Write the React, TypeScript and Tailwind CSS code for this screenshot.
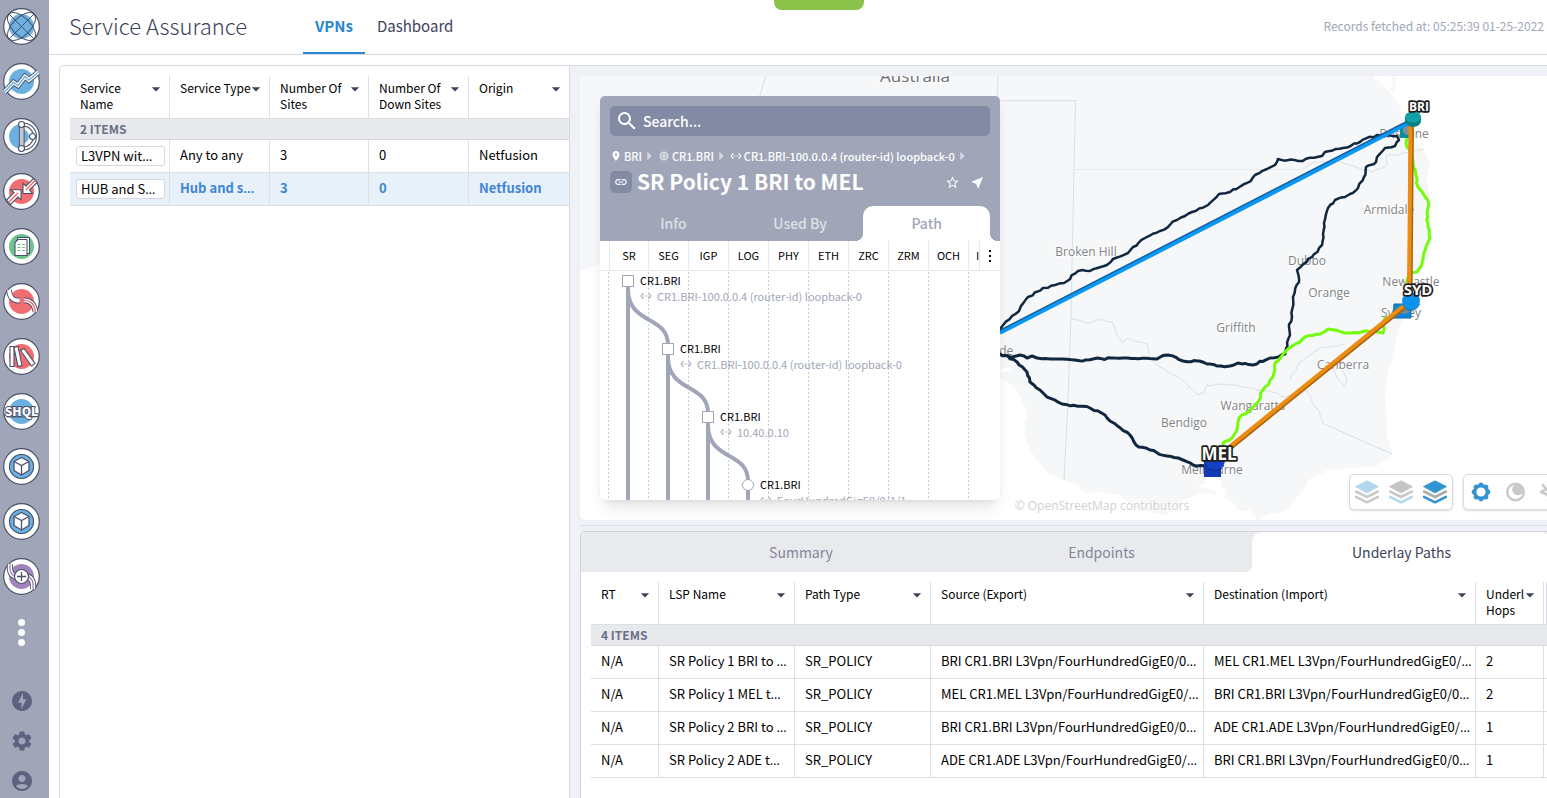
import type { ReactNode } from "react";
import {
  MdAccountCircle,
  MdArrowDropDown,
  MdArrowRight,
  MdLink,
  MdMemory,
  MdNearMe,
  MdOfflineBolt,
  MdPlace,
  MdSearch,
  MdSettings,
  MdSettingsEthernet,
  MdStarBorder,
} from "react-icons/md";

const INK = "#4b5068";
const BLUE = "#6cb0e2";
const RED = "#f26d71";
const GREEN = "#6cc48c";
const PURPLE = "#a284bd";

/* ---------- Sidebar ---------- */

function Disc({ color, children }: { color: string; children?: ReactNode }) {
  return (
    <svg viewBox="0 0 37 37" className="size-[37px]" aria-hidden="true">
      <circle cx="18.5" cy="18.5" r="17.8" fill="#fff" stroke={INK} strokeWidth="1.2" />
      <circle cx="18.5" cy="18.5" r="12.5" fill={color} />
      {children}
    </svg>
  );
}

function GlobeIcon() {
  return (
    <Disc color={BLUE}>
      <g fill="none" stroke={INK} strokeWidth="1">
        <ellipse cx="18.5" cy="18.5" rx="17.6" ry="9" transform="rotate(45 18.5 18.5)" />
        <ellipse cx="18.5" cy="18.5" rx="17.6" ry="9" transform="rotate(-45 18.5 18.5)" />
        <path d="M6 6 31 31M31 6 6 31" />
      </g>
    </Disc>
  );
}

function TrendIcon() {
  const d = "M1.5 29 10.5 19.5 15 22.5 22 13.5 26 17 35.5 9";
  return (
    <Disc color={BLUE}>
      <g fill="none">
        <path d={d} stroke={INK} strokeWidth="5.6" />
        <path d={d} stroke="#fff" strokeWidth="3.8" />
        <path d={d} stroke={BLUE} strokeWidth="1.4" />
      </g>
    </Disc>
  );
}

function TopologyIcon() {
  return (
    <svg viewBox="0 0 37 37" className="size-[37px]" aria-hidden="true">
      <circle cx="18.5" cy="18.5" r="17.8" fill="#fff" stroke={INK} strokeWidth="1.2" />
      <path d="M18.5 6a12.5 12.5 0 0 0 0 25z" fill={BLUE} />
      <path d="M20 6.5a12 12 0 0 1 0 24" fill="none" stroke={INK} strokeWidth="4" />
      <path d="M20 6.5a12 12 0 0 1 0 24" fill="none" stroke="#fff" strokeWidth="2" />
      <path d="M21 11.5a7.5 7.5 0 0 1 0 14z" fill={BLUE} />
      <rect x="16.3" y="7" width="4.8" height="23" fill="#c4c7d2" stroke={INK} strokeWidth="1" />
      <g fill="#fff" stroke={INK} strokeWidth="1.1">
        <circle cx="18.5" cy="6.5" r="3" />
        <circle cx="18.5" cy="30.5" r="3" />
        <circle cx="29.5" cy="18.5" r="3" />
      </g>
    </svg>
  );
}

function ConvergeIcon() {
  return (
    <Disc color={RED}>
      <g fill="#fff" stroke={INK} strokeWidth="1.1">
        <path d="M3.5 27 11 19.5 8 16.8 18 16.8 18 26.8 15 24 7.5 31.5z" />
        <path d="M34 9.5 26.5 17 29.5 20.5 20 20.5 20 10.5 23 13 30.5 5.5z" />
      </g>
      <path d="M5.5 29.5 15 20M32 7.5 23 17" stroke={RED} strokeWidth="1.5" />
    </Disc>
  );
}

function DocsIcon() {
  return (
    <Disc color={GREEN}>
      <g stroke={INK} strokeWidth="1.1" fill="#fff" strokeLinejoin="round">
        <path d="M14.5 9.5H26.5V25.5H14.5z" />
        <path d="M15 11.5H24V27.5H12V14.5z" />
      </g>
      <path d="M14.5 16.5h3M19 16.5h3M14.5 19.5h3M19 19.5h3M14.5 22.5h3M19 22.5h3" stroke={GREEN} strokeWidth="1.2" />
    </Disc>
  );
}

function SwirlIcon() {
  const a = "M6 7C6.5 14 10 18.5 17.5 17.5";
  const b = "M20 17.5C27 16.5 31.5 21 32.5 29";
  return (
    <Disc color={RED}>
      <g fill="none">
        <path d={a} stroke={INK} strokeWidth="5.6" />
        <path d={a} stroke="#fff" strokeWidth="3.8" />
        <path d={b} stroke={INK} strokeWidth="5.6" />
        <path d={b} stroke="#fff" strokeWidth="3.8" />
        <path d={b} stroke={RED} strokeWidth="1.4" />
        <path d="M16.5 18h4.5" stroke={RED} strokeWidth="4.5" />
      </g>
    </Disc>
  );
}

function BooksIcon() {
  return (
    <Disc color={RED}>
      <g fill="#fff" stroke={INK} strokeWidth="1.1">
        <path d="M7 8.5h4v20H7z" />
        <path d="M11 9.5 15 8.5 19 27.5 15 28.5z" />
        <path d="M17.5 12.5 21 10.5 32 25.5 28.5 28z" />
      </g>
    </Disc>
  );
}

function ShqlIcon() {
  return (
    <Disc color={BLUE}>
      <path d="M4 14h29M4 24h29" stroke={INK} strokeWidth="0.9" />
      <text
        x="18.5"
        y="23"
        textAnchor="middle"
        fontFamily="'Noto Sans CJK SC', sans-serif"
        fontWeight="900"
        fontSize="12"
        fill="#fff"
        stroke={INK}
        strokeWidth="1.8"
        paintOrder="stroke"
      >
        SHQL
      </text>
    </Disc>
  );
}

function CubeIcon() {
  return (
    <Disc color={BLUE}>
      <circle cx="18.5" cy="18.5" r="12" fill="none" stroke={INK} strokeWidth="1.1" />
      <path d="M18.5 9.5 26 13.5 26 22.5 18.5 27 11 22.5 11 13.5z" fill="#fff" stroke={INK} strokeWidth="1.3" strokeLinejoin="round" />
      <path d="M11 13.5 18.5 17.5 26 13.5M18.5 17.5V27" fill="none" stroke={INK} strokeWidth="1.3" />
    </Disc>
  );
}

function PlusSwirlIcon() {
  const a = "M7 6C6 14 9 18 14 19";
  const b = "M30 31C31 23 28 19 23 18";
  return (
    <Disc color={PURPLE}>
      <g fill="none">
        <path d={a} stroke={INK} strokeWidth="6" />
        <path d={a} stroke="#fff" strokeWidth="4.2" />
        <path d={a} stroke={PURPLE} strokeWidth="1.3" />
        <path d={b} stroke={INK} strokeWidth="6" />
        <path d={b} stroke="#fff" strokeWidth="4.2" />
        <path d={b} stroke={PURPLE} strokeWidth="1.3" />
      </g>
      <circle cx="18.5" cy="18.5" r="7" fill="#fff" stroke={INK} strokeWidth="1.2" />
      <path d="M14 18.5h9M18.5 14v9" stroke={INK} strokeWidth="1.3" />
    </Disc>
  );
}

const apps = [
  { label: "Network explorer", icon: <GlobeIcon /> },
  { label: "Trends", icon: <TrendIcon /> },
  { label: "Topology", icon: <TopologyIcon /> },
  { label: "Comparison", icon: <ConvergeIcon /> },
  { label: "Reports", icon: <DocsIcon /> },
  { label: "Failure impact", icon: <SwirlIcon /> },
  { label: "Inventory", icon: <BooksIcon /> },
  { label: "Query", icon: <ShqlIcon /> },
  { label: "Models", icon: <CubeIcon /> },
  { label: "Services", icon: <CubeIcon /> },
  { label: "Add application", icon: <PlusSwirlIcon /> },
];

function Sidebar() {
  return (
    <nav aria-label="Applications" className="flex w-[49px] shrink-0 flex-col items-center bg-[#a0a6b8] pt-2 pr-[6px]">
      <div className="flex flex-col gap-[18px]">
        {apps.map((app) => (
          <button key={app.label} type="button" aria-label={app.label} className="size-[37px]">
            {app.icon}
          </button>
        ))}
      </div>
      <button type="button" aria-label="More applications" className="mt-6 flex flex-col gap-[3px]">
        <span className="size-[7px] rounded-full bg-white" />
        <span className="size-[7px] rounded-full bg-white" />
        <span className="size-[7px] rounded-full bg-white" />
      </button>
      <div className="mt-auto flex flex-col gap-4 pb-[5px] text-[#5c6280]">
        <button type="button" aria-label="Activity">
          <MdOfflineBolt size={24} />
        </button>
        <button type="button" aria-label="Settings">
          <MdSettings size={24} />
        </button>
        <button type="button" aria-label="Account">
          <MdAccountCircle size={24} />
        </button>
      </div>
    </nav>
  );
}

/* ---------- Header ---------- */

function Header() {
  return (
    <header className="flex h-[55px] shrink-0 items-stretch border-b border-[#d9dbe2] pl-5 text-[#3c425a]">
      <h1 className="w-[234px] text-[22px] leading-[50px] font-light">Service Assurance</h1>
      <nav aria-label="Views" className="flex">
        <a href="#vpns" className="border-b-2 border-[#2a86d1] px-3 text-[15px] leading-[52px] font-bold text-[#2a86d1]">
          VPNs
        </a>
        <a href="#dashboard" className="px-3 text-[15px] leading-[52px]">
          Dashboard
        </a>
      </nav>
      <p className="ml-auto pr-[3px] text-[12px] leading-[52px] text-[#a0a6b8]">Records fetched at: 05:25:39 01-25-2022</p>
    </header>
  );
}

/* ---------- Tables ---------- */

function Clipped({ text }: { text: string }) {
  if (!text.endsWith("…")) return <>{text}</>;
  return (
    <>
      {text.slice(0, -1)}
      <span className="font-['Open_Sans',sans-serif]">…</span>
    </>
  );
}

function HeadCell({ label, sortable = true }: { label: string; sortable?: boolean }) {
  return (
    <th scope="col" className="h-[43px] border-r border-b border-[#dddfe5] p-0 text-left align-top font-normal">
      {sortable && (
        <button type="button" className="flex w-full items-start pt-1 pr-[7px] pl-[10px] text-left">
          <span className="-mr-1 min-w-0 flex-1 text-[12px] leading-4">{label}</span>
          <MdArrowDropDown size={20} className="-mr-1 -mt-px shrink-0 text-[#3c425a]" viewBox="0 0 24 24" />
        </button>
      )}
    </th>
  );
}

function CountRow({ label, span }: { label: string; span: number }) {
  return (
    <tr>
      <td colSpan={span} className="h-[21px] border-b border-[#d5d7df] bg-[#e8e9ed] py-0 pl-[10px] text-[12px] leading-5 font-bold text-[#6b7086]">
        {label}
      </td>
    </tr>
  );
}

const services = [
  { name: "L3VPN wit…", type: "Any to any", sites: "3", down: "0", origin: "Netfusion", active: false },
  { name: "HUB and S…", type: "Hub and s…", sites: "3", down: "0", origin: "Netfusion", active: true },
];

function ServiceTable() {
  return (
    <table className="w-full table-fixed border-separate border-spacing-0 [&_th_span]:-mr-[6px]">
      <colgroup>
        <col className="w-[100px]" />
        <col className="w-[100px]" />
        <col className="w-[99px]" />
        <col className="w-[100px]" />
        <col />
      </colgroup>
      <thead>
        <tr className="[&>th:last-child]:border-r-0">
          <HeadCell label="Service Name" />
          <HeadCell label="Service Type" />
          <HeadCell label="Number Of Sites" />
          <HeadCell label="Number Of Down Sites" />
          <HeadCell label="Origin" />
        </tr>
      </thead>
      <tbody>
        <CountRow label="2 ITEMS" span={5} />
        {services.map((s) => (
          <tr
            key={s.name}
            aria-selected={s.active}
            className={
              "[&>td]:h-[33px] [&>td]:border-b [&>td]:border-[#dddfe5] [&>td]:p-0 [&>td]:align-top [&>td:not(:last-child)]:border-r " +
              (s.active ? "bg-[#e8f1fa] font-bold text-[#3f85d0]" : "")
            }
          >
            <td>
              <button
                type="button"
                className="mt-[6px] ml-[6px] block h-5 w-[89px] rounded-[3px] border border-[#d5d7df] bg-white pl-1 text-left text-[13px] leading-[18px] font-normal whitespace-nowrap text-black"
              >
                <Clipped text={s.name} />
              </button>
            </td>
            {[s.type, s.sites, s.down, s.origin].map((v, i) => (
              <td key={i} className="text-[13px] leading-[30px] whitespace-nowrap">
                <span className="pl-[10px]">
                  <Clipped text={v} />
                </span>
              </td>
            ))}
          </tr>
        ))}
      </tbody>
    </table>
  );
}

const paths = [
  ["N/A", "SR Policy 1 BRI to …", "SR_POLICY", "BRI CR1.BRI L3Vpn/FourHundredGigE0/0…", "MEL CR1.MEL L3Vpn/FourHundredGigE0/…", "2"],
  ["N/A", "SR Policy 1 MEL t…", "SR_POLICY", "MEL CR1.MEL L3Vpn/FourHundredGigE0/…", "BRI CR1.BRI L3Vpn/FourHundredGigE0/0…", "2"],
  ["N/A", "SR Policy 2 BRI to …", "SR_POLICY", "BRI CR1.BRI L3Vpn/FourHundredGigE0/0…", "ADE CR1.ADE L3Vpn/FourHundredGigE0/…", "1"],
  ["N/A", "SR Policy 2 ADE t…", "SR_POLICY", "ADE CR1.ADE L3Vpn/FourHundredGigE0/…", "BRI CR1.BRI L3Vpn/FourHundredGigE0/0…", "1"],
];

function PathTable() {
  return (
    <table className="w-full table-fixed border-separate border-spacing-0">
      <colgroup>
        <col className="w-[68px]" />
        <col className="w-[136px]" />
        <col className="w-[136px]" />
        <col className="w-[273px]" />
        <col className="w-[272px]" />
        <col className="w-[68px]" />
        <col />
      </colgroup>
      <thead>
        <tr>
          <HeadCell label="RT" />
          <HeadCell label="LSP Name" />
          <HeadCell label="Path Type" />
          <HeadCell label="Source (Export)" />
          <HeadCell label="Destination (Import)" />
          <HeadCell label="Underl Hops" />
          <HeadCell label="" sortable={false} />
        </tr>
      </thead>
      <tbody>
        <CountRow label="4 ITEMS" span={7} />
        {paths.map((row) => (
          <tr key={row[1]}>
            {[...row, ""].map((v, i) => (
              <td
                key={i}
                className="h-[33px] border-b border-[#dddfe5] p-0 align-top text-[13px] leading-[30px] whitespace-nowrap not-last:border-r"
              >
                <span className="pl-[10px]">
                  <Clipped text={v} />
                </span>
              </td>
            ))}
          </tr>
        ))}
      </tbody>
    </table>
  );
}

/* ---------- Map ---------- */

type Pt = [number, number];

/* Adds small deterministic bends so that a coarse route reads like a surveyed one. */
function rough(points: Pt[], amp: number): string {
  let seed = 7;
  const rnd = () => {
    seed = (seed * 16807) % 2147483647;
    return seed / 2147483647 - 0.5;
  };
  let d = `M${points[0][0]} ${points[0][1]}`;
  for (let i = 1; i < points.length; i++) {
    const [x0, y0] = points[i - 1];
    const [x1, y1] = points[i];
    const n = Math.max(1, Math.round(Math.hypot(x1 - x0, y1 - y0) / 4));
    for (let k = 1; k <= n; k++) {
      const j = k === n ? 0 : amp;
      d += `L${(x0 + ((x1 - x0) * k) / n + rnd() * j).toFixed(1)} ${(y0 + ((y1 - y0) * k) / n + rnd() * j).toFixed(1)}`;
    }
  }
  return d;
}

const coast: Pt[] = [
  [1373, 76], [1388, 90], [1398, 103], [1403, 120], [1413, 140], [1423, 150], [1430, 163], [1427, 180], [1429, 203], [1431, 240],
  [1427, 262], [1414, 273], [1410, 300], [1404, 318], [1396, 337], [1393, 357], [1388, 370], [1385, 390], [1386, 413], [1388, 440],
  [1392, 455], [1377, 466], [1330, 470], [1313, 477], [1297, 497], [1287, 510], [1270, 513], [1257, 520], [1250, 510], [1237, 510],
  [1233, 503], [1223, 497], [1232, 492], [1222, 488], [1221, 480], [1206, 477], [1204, 484], [1196, 486], [1214, 490], [1216, 494], [1198, 494],
  [1182, 500], [1180, 508], [1165, 516], [1150, 512], [1132, 505], [1120, 495], [1100, 492], [1087, 494], [1075, 484], [1062, 480],
  [1045, 470], [1030, 450], [1023, 435], [1026, 420], [1027, 410], [1015, 388], [1001, 378], [1000, 374], [1011, 371], [1011, 366], [1000, 370],
  [900, 340], [700, 250], [600, 263], [580, 271],
];

const darkRoutes: Pt[][] = [
  [[1000, 329], [1012, 316], [1019, 311], [1021, 306], [1028, 297], [1043, 288], [1064, 283], [1078, 271], [1090, 271], [1107, 265], [1113, 259], [1128, 253], [1133, 247], [1145, 238], [1160, 231], [1177, 220], [1192, 212], [1208, 205], [1219, 194], [1230, 192], [1247, 183], [1255, 175], [1267, 169], [1275, 165], [1278, 159], [1298, 161], [1322, 156], [1325, 152], [1343, 148], [1360, 142], [1377, 135], [1397, 136]],
  [[1397, 136], [1399, 140], [1395, 146], [1385, 148], [1377, 157], [1376, 162], [1366, 167], [1364, 177], [1358, 188], [1350, 194], [1345, 197], [1335, 200], [1328, 208], [1324, 223], [1322, 245], [1312, 257], [1297, 270], [1299, 282], [1293, 297], [1292, 317], [1289, 327], [1290, 335], [1285, 353]],
  [[1000, 354], [1010, 357], [1020, 355], [1027, 358], [1032, 356], [1037, 358], [1058, 359], [1083, 361], [1093, 359], [1123, 358], [1157, 359], [1162, 356], [1168, 355], [1183, 361], [1197, 361], [1207, 364], [1217, 366], [1230, 366], [1238, 363], [1253, 365], [1270, 358], [1285, 354]],
  [[1008, 356], [1017, 362], [1027, 372], [1030, 382], [1040, 390], [1047, 397], [1062, 404], [1090, 408], [1105, 415], [1110, 421], [1130, 435], [1136, 445], [1150, 450], [1167, 456], [1183, 460], [1193, 465], [1206, 466]],
];

const greenRoutes: Pt[][] = [
  [[1407, 138], [1407, 147], [1411, 152], [1413, 163], [1418, 187], [1423, 193], [1429, 204], [1427, 213], [1428, 227], [1430, 238], [1425, 250], [1422, 263], [1417, 272], [1410, 273], [1407, 280], [1407, 300]],
  [[1385, 318], [1383, 333], [1373, 331], [1347, 333], [1328, 329], [1320, 334], [1305, 337], [1300, 342], [1288, 349], [1275, 363], [1273, 377], [1263, 390], [1258, 402], [1250, 410], [1242, 415], [1238, 422], [1237, 430], [1232, 438], [1223, 443], [1222, 452]],
];

const borders: Pt[][] = [
  [[1070, 317], [1078, 320], [1088, 323], [1098, 320], [1112, 322], [1116, 333], [1122, 343], [1128, 338], [1135, 341], [1147, 344], [1150, 358], [1158, 366], [1185, 382], [1198, 395], [1204, 393], [1207, 385], [1233, 385], [1253, 388], [1277, 393], [1283, 397], [1307, 390], [1313, 403], [1320, 413], [1322, 423]],
  [[1303, 169], [1315, 162], [1335, 161], [1350, 165], [1365, 170], [1372, 172], [1387, 165], [1386, 156], [1400, 154], [1412, 152], [1424, 149]],
  [[1290, 380], [1300, 362], [1320, 348], [1345, 344]],
];

const cities = [
  { name: "Broken Hill", x: 1086, y: 256 },
  { name: "Griffith", x: 1236, y: 332 },
  { name: "Bendigo", x: 1184, y: 427 },
  { name: "Wangaratta", x: 1253, y: 410 },
  { name: "Melbourne", x: 1212, y: 474 },
  { name: "Dubbo", x: 1307, y: 265 },
  { name: "Orange", x: 1329, y: 297 },
  { name: "Armidale", x: 1389, y: 214 },
  { name: "Newcastle", x: 1411, y: 286 },
  { name: "Sydney", x: 1401, y: 317 },
  { name: "Canberra", x: 1343, y: 369 },
  { name: "Brisbane", x: 1404, y: 138 },
  { name: "Adelaide", x: 989, y: 355 },
];

const sites = [
  { name: "BRI", x: 1419, y: 111, size: 12 },
  { name: "SYD", x: 1418, y: 295, size: 15 },
  { name: "MEL", x: 1219, y: 460, size: 17 },
];

function MapCanvas() {
  return (
    <svg
      viewBox="580 76 967 444"
      preserveAspectRatio="xMinYMin slice"
      className="block size-full"
      role="img"
      aria-label="Map of south-east Australia with service paths"
    >
      <path d={rough(coast, 2) + "L580 76Z"} fill="#f5f7f9" />
      <path d="M1391 76l4 1 1 12-4 4-2-5 3-5zM1226 490l6 3-6 3z" fill="#f5f7f9" />
      <g fill="none" stroke="#dcdfe2" strokeWidth="1">
        <path d="M766 76 759 98M998 76 997 98M1000 100.5H1076M1075.5 100 1074 169 1071 317 1068 400 1064 481" />
        <path d="M1074 169.5H1303" stroke="#e6e8ea" />
        {borders.map((b, i) => (
          <path key={i} d={rough(b, 2)} />
        ))}
        <path d="M1322 423 1392 454" />
        <path d="M1333 366 1337 378 1345 387 1347 380 1341 366" />
      </g>
      <g
        fill="#818386"
        stroke="#fff"
        strokeWidth="2"
        strokeOpacity="0.8"
        paintOrder="stroke"
        fontFamily="'Open Sans', 'Noto Sans', sans-serif"
        fontSize="12"
        textAnchor="middle"
      >
        {cities.map((c) => (
          <text key={c.name} x={c.x} y={c.y}>
            {c.name}
          </text>
        ))}
        <text x="915" y="82" fontSize="17" fontWeight="500" fill="#6c6e71">
          Australia
        </text>
        <text x="1102" y="510" fill="#cfd0d2">
          © OpenStreetMap contributors
        </text>
      </g>
      <g fill="none" strokeLinejoin="round" strokeLinecap="round">
        {darkRoutes.map((r, i) => (
          <path key={i} d={rough(r, 2)} stroke="#10273f" strokeWidth={i > 1 ? 3 : 2.5} />
        ))}
        {greenRoutes.map((r, i) => (
          <path key={i} d={rough(r, 2)} stroke="#74fb0c" strokeWidth="3" />
        ))}
      </g>
      <path d="M1400 127h11v11h-11z" fill="#0a8f94" />
      <ellipse cx="1407" cy="130" rx="4" ry="5" fill="#7e9099" />
      <path d="M1394 304h17v14h-18z" fill="#0b86dd" stroke="#0a6cb5" strokeWidth="1" />
      <ellipse cx="1404" cy="310" rx="6" ry="4" fill="#6f8798" />
      <g fill="none">
        <path d="M1000 332 1411 121" stroke="#125a96" strokeWidth="4.5" />
        <path d="M1000 333 1411 122" stroke="#0b97f5" strokeWidth="3.6" />
        <path d="M1411.5 122 1410 300M1410 302 1226 451" stroke="#a8650e" strokeWidth="5" />
        <path d="M1410.5 122 1409 300M1409.5 301 1225.5 450" stroke="#ec8c11" strokeWidth="4" />
      </g>
      <path d="M1405 117v4a8 6 0 0 0 16 0v-4z" fill="#077f85" />
      <ellipse cx="1413" cy="117" rx="8" ry="5.5" fill="#10a0a6" />
      <circle cx="1411" cy="301" r="9" fill="#0e93ea" />
      <path d="M1402.5 304a9 9 0 0 0 17 0" fill="none" stroke="#0a76c2" strokeWidth="1" />
      <path d="M1204 460h17v17h-17z" fill="#123ab4" />
      <circle cx="1215" cy="460" r="10" fill="#1441c4" />
      <path d="M1206 465a10 10 0 0 0 18 0" fill="none" stroke="#0c2b86" strokeWidth="1" />
      <g
        fill="#fff"
        stroke="#1e1e1e"
        strokeWidth="3.4"
        strokeLinejoin="round"
        paintOrder="stroke"
        fontFamily="'Open Sans', 'Noto Sans', sans-serif"
        fontWeight="700"
        textAnchor="middle"
      >
        {sites.map((s) => (
          <text key={s.name} x={s.x} y={s.y} fontSize={s.size}>
            {s.name}
          </text>
        ))}
      </g>
    </svg>
  );
}

function LayersGlyph({ top, mid, low }: { top: string; mid: string; low: string }) {
  return (
    <svg viewBox="0 0 24 24" className="size-6" aria-hidden="true">
      <path d="M12 .8 23.5 6.6 12 13 .5 6.6z" fill={top} stroke={top} strokeWidth="0.8" strokeLinejoin="round" />
      <path d="M1 11.5 12 17 23 11.5" fill="none" stroke={mid} strokeWidth="2.6" strokeLinecap="round" strokeLinejoin="round" />
      <path d="M1 16.8 12 22.3 23 16.8" fill="none" stroke={low} strokeWidth="2.6" strokeLinecap="round" strokeLinejoin="round" />
    </svg>
  );
}

function MapToolbar() {
  const box = "flex h-[36px] w-[104px] items-center justify-center gap-[10px] rounded-[5px] border border-[#dcdcdf] bg-white shadow-sm";
  return (
    <div className="absolute -right-5 bottom-[10px] flex gap-[10px]">
      <div className={box}>
        <button type="button" aria-label="Top layer">
          <LayersGlyph top="#b3d7ee" mid="#c9c9ca" low="#c9c9ca" />
        </button>
        <button type="button" aria-label="Bottom layer">
          <LayersGlyph top="#c5c5c6" mid="#c9c9ca" low="#b3d7ee" />
        </button>
        <button type="button" aria-label="All layers">
          <LayersGlyph top="#3494d1" mid="#adadae" low="#3494d1" />
        </button>
      </div>
      <div className={box}>
        <button type="button" aria-label="Day">
          <svg viewBox="0 0 24 24" className="size-6" aria-hidden="true">
            <g fill="#3494d1">
              <circle cx="12" cy="12" r="8" />
              {[0, 45, 90, 135, 180, 225, 270, 315].map((a) => (
                <circle key={a} cx="12" cy="5" r="2.4" transform={`rotate(${a} 12 12)`} />
              ))}
            </g>
            <circle cx="12" cy="12" r="4.6" fill="#fff" />
          </svg>
        </button>
        <button type="button" aria-label="Night">
          <svg viewBox="0 0 24 24" className="size-6" aria-hidden="true">
            <circle cx="12.5" cy="12" r="8.3" fill="#fff" stroke="#c9c9ca" strokeWidth="2.4" />
            <circle cx="15" cy="9.5" r="5.8" fill="#c9c9ca" />
          </svg>
        </button>
        <button type="button" aria-label="Labels">
          <svg viewBox="0 0 24 24" className="size-6" aria-hidden="true">
            <g fill="none" stroke="#c9c9ca" strokeWidth="2.6" strokeLinecap="round">
              <path d="M6 5 9 9 4 12M4 12 9 14 14 19M12 4v16M9 9l9 9" />
            </g>
          </svg>
        </button>
      </div>
    </div>
  );
}

/* ---------- Policy panel ---------- */

const hops = [
  { node: "CR1.BRI", via: "CR1.BRI-100.0.0.4 (router-id) loopback-0" },
  { node: "CR1.BRI", via: "CR1.BRI-100.0.0.4 (router-id) loopback-0" },
  { node: "CR1.BRI", via: "10.40.0.10" },
  { node: "CR1.BRI", via: "FourHundredGigE0/0/1/1" },
];

const layers = ["SR", "SEG", "IGP", "LOG", "PHY", "ETH", "ZRC", "ZRM", "OCH"];

function HopTree() {
  return (
    <div className="relative h-[229px] overflow-hidden">
      <svg viewBox="0 0 400 229" className="absolute top-0 left-0 h-[229px] w-[400px]" aria-hidden="true">
        <g stroke="#c9ccd6" strokeDasharray="2 2">
          {Array.from({ length: 10 }, (_, i) => (
            <path key={i} d={`M${8.5 + i * 40} 1V229`} />
          ))}
        </g>
        <g fill="none" stroke="#a0a6b8" strokeWidth="4">
          {[0, 1, 2, 3].map((i) => (
            <path key={i} d={`M${28 + i * 40} ${10 + i * 68}V229`} />
          ))}
          {[0, 1, 2].map((i) => {
            const x = 28 + i * 40;
            const y = 18 + i * 68;
            return <path key={i} d={`M${x} ${y}C${x} ${y + 36} ${x + 40} ${y + 26} ${x + 40} ${y + 56}`} />;
          })}
        </g>
        <g fill="#fff" stroke="#a0a6b8">
          {[0, 1, 2].map((i) => (
            <rect key={i} x={22.5 + i * 40} y={4.5 + i * 68} width="11" height="11" />
          ))}
          <circle cx="148" cy="214" r="5.5" />
        </g>
      </svg>
      <ol className="relative">
        {hops.map((h, i) => (
          <li key={i} className="h-[68px] pt-px text-[11px] leading-4 whitespace-nowrap" style={{ paddingLeft: 40 + i * 40 }}>
            <p>{h.node}</p>
            <p className="flex items-center gap-[5px] text-[#a0a6b8]">
              <MdSettingsEthernet size={12} />
              {h.via}
            </p>
          </li>
        ))}
      </ol>
    </div>
  );
}

function PolicyPanel() {
  return (
    <section aria-label="Policy details" className="absolute top-5 left-5 w-[400px] overflow-hidden rounded-[5px] bg-white shadow-lg">
      <div className="bg-[#a0a6b8] px-[10px] pt-[10px] text-white">
        <label className="flex h-[30px] items-center gap-1 rounded-[5px] bg-[#838aa3] pl-[5px]">
          <MdSearch size={24} />
          <input
            type="text"
            aria-label="Search"
            placeholder="Search..."
            className="min-w-0 flex-1 bg-transparent text-[14px] leading-5 font-medium outline-none placeholder:text-white placeholder:opacity-100"
          />
        </label>
        <nav aria-label="Breadcrumb" className="mt-[10px] flex h-5 items-center text-[11px] leading-5 font-medium whitespace-nowrap">
          <MdPlace size={12} className="mr-[2px]" />
          <a href="#bri">BRI</a>
          <MdArrowRight size={20} className="-ml-[3px] opacity-60" />
          <MdMemory size={12} className="-ml-px mr-[2px] opacity-80" />
          <a href="#cr1">CR1.BRI</a>
          <MdArrowRight size={20} className="-ml-[3px] opacity-60" />
          <MdSettingsEthernet size={12} className="-ml-px mr-[2px]" />
          <a href="#loopback">CR1.BRI-100.0.0.4 (router-id) loopback-0</a>
          <MdArrowRight size={20} className="-ml-[3px] opacity-60" />
        </nav>
        <div className="mt-[5px] flex h-[22px] items-center">
          <span className="flex size-[22px] items-center justify-center rounded-[5px] bg-[#838aa3]">
            <MdLink size={14} />
          </span>
          <h2 className="ml-[5px] flex-1 pb-[2px] text-[21px] leading-[22px] font-bold whitespace-nowrap">SR Policy 1 BRI to MEL</h2>
          <button type="button" aria-label="Favourite">
            <MdStarBorder size={15} />
          </button>
          <button type="button" aria-label="Locate" className="mr-[5px] ml-[10px]">
            <MdNearMe size={15} />
          </button>
        </div>
        <div role="tablist" className="mt-[13px] grid h-[35px] grid-cols-3 text-[14px] leading-[35px] font-medium text-white/65">
          <button type="button" role="tab" aria-selected={false}>
            Info
          </button>
          <button type="button" role="tab" aria-selected={false}>
            Used By
          </button>
          <button
            type="button"
            role="tab"
            aria-selected={true}
            className="relative rounded-t-[10px] bg-white text-[#a0a6b8] before:absolute before:bottom-0 before:-left-[8px] before:size-[8px] before:bg-[radial-gradient(circle_at_0_0,transparent_8px,#fff_8px)] after:absolute after:-right-[8px] after:bottom-0 after:size-[8px] after:bg-[radial-gradient(circle_at_100%_0,transparent_8px,#fff_8px)]"
          >
            Path
          </button>
        </div>
      </div>
      <div className="flex h-[30px] items-stretch border-b border-[#e8e9ed] pl-[9px] text-[11px] leading-7">
        {layers.map((l, i) => (
          <span key={l} className={(i === 0 ? "w-[39px]" : "w-10") + " shrink-0 border-l border-[#e8e9ed] text-center"}>
            {l}
          </span>
        ))}
        <span className="min-w-0 flex-1 overflow-hidden border-l border-[#e8e9ed] pl-[7px]">I</span>
        <button type="button" aria-label="Column options" className="flex w-[21px] flex-col items-center justify-center gap-[3px] border-l border-[#e8e9ed]">
          <span className="size-[2px] bg-black" />
          <span className="size-[2px] bg-black" />
          <span className="size-[2px] bg-black" />
        </button>
      </div>
      <HopTree />
    </section>
  );
}

/* ---------- Page ---------- */

function DetailTabs() {
  return (
    <div className="overflow-hidden bg-[#e9eaee]">
      <div role="tablist" className="flex pl-[70px] text-[14px] leading-10 text-[#83879a]">
        <button type="button" role="tab" aria-selected={false} className="w-[300px] shrink-0">
          Summary
        </button>
        <button type="button" role="tab" aria-selected={false} className="w-[301px] shrink-0">
          Endpoints
        </button>
        <button
          type="button"
          role="tab"
          aria-selected={true}
          className="relative w-[299px] shrink-0 rounded-t-[10px] bg-white text-[#3c425a] before:absolute before:bottom-0 before:-left-[8px] before:size-[8px] before:bg-[radial-gradient(circle_at_0_0,transparent_8px,#fff_8px)]"
        >
          Underlay Paths
        </button>
      </div>
    </div>
  );
}

export default function App() {
  return (
    <div className="relative flex h-screen overflow-hidden bg-white font-['Noto_Sans_CJK_SC','Noto_Sans',sans-serif] text-black">
      <Sidebar />
      <div className="flex min-w-0 flex-1 flex-col">
        <Header />
        <main className="mt-[10px] ml-[10px] flex min-h-0 flex-1 overflow-hidden rounded-tl-[5px] border-t border-l border-[#d9dbe2] bg-[#eff1f6]">
          <section aria-label="Services" className="w-[510px] shrink-0 border-r border-[#d9dbe2] bg-white pt-[10px] pl-[10px]">
            <ServiceTable />
          </section>
          <div className="flex min-w-0 flex-1 flex-col pt-[10px] pl-[10px]">
            <section aria-label="Map" className="relative h-[444px] shrink-0 overflow-hidden rounded-l-[5px] bg-white">
              <MapCanvas />
              <PolicyPanel />
              <MapToolbar />
            </section>
            <div className="mt-[5px] h-px shrink-0 bg-[#d9dbe2]" />
            <section aria-label="Service details" className="mt-[5px] min-h-0 flex-1 overflow-hidden rounded-tl-[5px] border-t border-l border-[#d0d3dd] bg-white">
              <DetailTabs />
              <div className="pt-[10px] pl-[10px]">
                <PathTable />
              </div>
            </section>
          </div>
        </main>
      </div>
      <div className="absolute top-0 left-1/2 h-[10px] w-[90px] rounded-b-[8px] bg-[#8bc34a]" />
    </div>
  );
}
